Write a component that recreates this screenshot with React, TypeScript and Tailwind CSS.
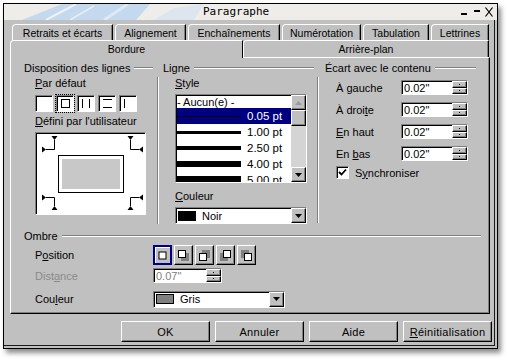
import React from "react";

const raised =
  "border-t border-l border-t-white border-l-white border-r border-b border-r-black border-b-black shadow-[inset_-1px_-1px_0_#808080]";
const sunken =
  "border-t border-l border-t-[#808080] border-l-[#808080] border-r border-b border-r-white border-b-white shadow-[inset_1px_1px_0_#000]";

function Rule() {
  return <div className="flex-1 ml-[4px] h-[2px] border-t border-t-[#808080] border-b border-b-white" />;
}

function Tri({ up, c = "#000" }: { up?: boolean; c?: string }) {
  return (
    <svg width="7" height="4" viewBox="0 0 7 4">
      <path d={up ? "M3.5 0L7 4H0z" : "M0 0h7L3.5 4z"} fill={c} />
    </svg>
  );
}

function Spin() {
  return (
    <div className="w-[15px] h-full flex flex-col">
      <div className={`flex-1 ${raised} bg-[#c0c0c0] flex items-center justify-center`}>
        <div className="w-px h-px bg-black" />
      </div>
      <div className={`flex-1 ${raised} bg-[#c0c0c0] flex items-center justify-center`}>
        <div className="w-px h-px bg-black" />
      </div>
    </div>
  );
}

function SpinField({ value, disabled, w }: { value: string; disabled?: boolean; w: string }) {
  return (
    <div className={`${w} h-[15px] ${sunken} bg-white flex items-stretch`}>
      <span className={`flex-1 pl-[2px] pt-[1px] leading-[12px] ${disabled ? "text-[#808080]" : "text-black"}`}>{value}</span>
      <Spin />
    </div>
  );
}

function ColorBox({ swatch, label, w }: { swatch: string; label: string; w: string }) {
  return (
    <div className={`${w} h-[17px] ${sunken} bg-white flex items-center`}>
      <div className="ml-[2px] w-[18px] h-[10px] border border-black" style={{ background: swatch }} />
      <span className="ml-[6px] flex-1">{label}</span>
      <div className={`w-[15px] h-full ${raised} bg-[#c0c0c0] flex items-center justify-center`}>
        <Tri />
      </div>
    </div>
  );
}

function PresetBox({ kind }: { kind: number }) {
  return (
    <div
      className={`w-[18px] h-[17px] ${sunken} bg-white relative ${kind === 1 ? "outline outline-1 outline-dotted outline-black" : ""}`}
    >
      <svg width="16" height="15" className="absolute left-0 top-0">
        {kind === 1 && <rect x="4.5" y="3.5" width="8" height="8" fill="none" stroke="#000" />}
        {kind === 2 && (
          <>
            <line x1="4.5" y1="3" x2="4.5" y2="12" stroke="#000" />
            <line x1="11.5" y1="3" x2="11.5" y2="12" stroke="#000" />
          </>
        )}
        {kind === 3 && (
          <>
            <line x1="4" y1="3.5" x2="13" y2="3.5" stroke="#000" />
            <line x1="4" y1="11.5" x2="13" y2="11.5" stroke="#000" />
          </>
        )}
        {kind === 4 && <line x1="4.5" y1="3" x2="4.5" y2="12" stroke="#000" />}
      </svg>
    </div>
  );
}

function ShadowBtn({ dx, dy, sel }: { dx: number; dy: number; sel?: boolean }) {
  const sx = dx > 0 ? 1 : dx < 0 ? 4 : 2.5;
  const sy = dy > 0 ? 1 : dy < 0 ? 4 : 2.5;
  return (
    <div
      className={`w-[19px] h-[20px] ${sel ? "border-2 border-[#000080] shadow-[inset_1px_1px_0_#fff]" : raised} bg-[#c0c0c0] flex items-center justify-center`}
    >
      <svg width="13" height="13" viewBox="0 0 13 13">
        {(dx !== 0 || dy !== 0) && <rect x={sx + dx} y={sy + dy} width="8" height="8" fill="#808080" />}
        <rect x={sx + 0.5} y={sy + 0.5} width="7" height="7" fill="#fff" stroke="#000" />
      </svg>
    </div>
  );
}

const lineStyles = [
  { label: "0.05 pt", h: 1, sel: true },
  { label: "1.00 pt", h: 3 },
  { label: "2.50 pt", h: 4 },
  { label: "4.00 pt", h: 6 },
  { label: "5.00 pt", h: 8 },
];

function TitleBar() {
  return (
    <div className="h-[16px] relative bg-[#eeede9] flex items-center overflow-hidden">
      <svg width="493" height="16" className="absolute left-0 top-0">
        <polygon points="18,16 58,0 146,0 132,16" fill="#c4d8ee" />
        <polygon points="150,16 170,4 200,0 190,16" fill="#dde6ef" />
        <line x1="42" y1="16" x2="72" y2="0" stroke="#fff" strokeWidth="2" opacity="0.7" />
        <line x1="66" y1="16" x2="90" y2="2" stroke="#fff" strokeWidth="1.5" opacity="0.6" />
        <line x1="100" y1="16" x2="124" y2="0" stroke="#e6eef8" strokeWidth="3" opacity="0.8" />
        <rect x="457" y="9" width="6" height="2" fill="#000" />
        <rect x="470" y="6" width="6" height="2" fill="#000" />
        <path d="M481.5 3.5L488.5 12.5M488.5 3.5L481.5 12.5" stroke="#000" strokeWidth="1.2" />
      </svg>
      <span className="relative ml-[199px] font-['DejaVu_Sans_Mono',monospace] text-[11px] leading-[12px]">
        Paragraphe
      </span>
    </div>
  );
}

export default function App() {
  const tabs1: [string, string][] = [
    ["Retraits et écarts", "w-[101px]"],
    ["Alignement", "w-[71px]"],
    ["Enchaînements", "w-[92px]"],
    ["Numérotation", "w-[79px]"],
    ["Tabulation", "w-[66px]"],
    ["Lettrines", "w-[58px]"],
  ];
  return (
    <div className="w-[509px] h-[361px] bg-white overflow-hidden font-['Liberation_Sans',Arial,sans-serif] text-[11px] leading-[12px] text-black">
      <div className="ml-[3px] mt-[3px] w-[495px] h-[346px] border border-black bg-[#c0c0c0] shadow-[3px_4px_5px_rgba(0,0,0,0.45)] flex flex-col">
        <TitleBar />
        <div className="flex-1 mr-[2px] mb-[2px] border-r border-b border-[#1a1a1a] flex flex-col pt-[4px]">
          {/* tabs */}
          <div className="ml-[8px] flex gap-[2px] h-[16px]">
            {tabs1.map(([t, w]) => (
              <div
                key={t}
                className={`${w} h-[16px] border-t border-l border-white border-r border-r-black shadow-[inset_-1px_0_0_#808080] rounded-tl-[4px] flex items-center justify-center text-[10.5px]`}
              >
                {t}
              </div>
            ))}
          </div>
          <div className="ml-[6px] flex items-start h-[17px]">
            <div className="relative z-10 w-[233px] h-[18px] bg-[#c0c0c0] border-t border-l border-white border-r border-r-black rounded-tl-[4px] flex items-center justify-center text-[10.5px] pb-[1px]">
              Bordure
            </div>
            <div className="w-[246px] h-[17px] border-t border-l border-white border-r border-r-black shadow-[inset_-1px_0_0_#808080] rounded-tl-[4px] flex items-center justify-center text-[10.5px]">
              Arrière-plan
            </div>
          </div>

          {/* panel */}
          <div className="ml-[6px] w-[480px] h-[257px] border-t border-l border-white border-r border-b border-r-black border-b-black shadow-[inset_-1px_-1px_0_#808080] flex flex-col">
            <div className="h-[168px] flex">
              {/* Disposition des lignes */}
              <div className="w-[146px] flex flex-col">
                <div className="mt-[4px] ml-[13px] mr-[4px] flex items-center h-[12px]">
                  <span>Disposition des lignes</span>
                  <Rule />
                </div>
                <div className="pl-[24px] flex flex-col">
                  <div className="mt-[3px] h-[12px]">
                    <span className="underline">P</span>ar défaut
                  </div>
                  <div className="mt-[6px] flex gap-[3px]">
                    {[0, 1, 2, 3, 4].map((k) => (
                      <PresetBox key={k} kind={k} />
                    ))}
                  </div>
                  <div className="mt-[3px] h-[12px]">
                    <span className="underline">D</span>éfini par l'utilisateur
                  </div>
                  <div className={`mt-[5px] w-[111px] h-[83px] ${sunken} bg-white relative`}>
                    <svg width="109" height="81" className="absolute left-0 top-0">
                      <g stroke="#000" strokeWidth="1" fill="none">
                        <path d="M18.5 7V16.5H10" />
                        <path d="M94.5 7V16.5H103" />
                        <path d="M10 64.5H18.5V73" />
                        <path d="M103 64.5H94.5V73" />
                      </g>
                      <g fill="#000">
                        <path d="M15.5 3h6l-3 4z" />
                        <path d="M91.5 3h6l-3 4z" />
                        <path d="M6 13.5v6l4-3z" />
                        <path d="M107 13.5v6l-4-3z" />
                        <path d="M6 61.5v6l4-3z" />
                        <path d="M107 61.5v6l-4-3z" />
                        <path d="M15.5 77h6l-3-4z" />
                        <path d="M91.5 77h6l-3-4z" />
                      </g>
                      <rect x="22.5" y="22.5" width="65" height="37" fill="#fff" stroke="#000" />
                      <rect x="26" y="26" width="58" height="30" fill="#c8c8c8" />
                    </svg>
                  </div>
                </div>
              </div>

              {/* Ligne */}
              <div className="w-[160px] flex flex-col">
                <div className="mt-[4px] ml-[6px] mr-[3px] flex items-center h-[12px]">
                  <span>Ligne</span>
                  <Rule />
                </div>
                <div className="mt-[3px] mb-[3px] flex-1 border-l border-l-[#808080] shadow-[inset_1px_0_0_#fff] pl-[17px] flex flex-col">
                  <div className="h-[12px]">
                    <span className="underline">S</span>tyle
                  </div>
                  <div className={`mt-[5px] w-[132px] h-[89px] ${sunken} bg-white flex overflow-hidden`}>
                    <div className="flex-1 flex flex-col pl-[1px] pt-[1px]">
                      <div className="h-[15px] flex items-center">- Aucun(e) -</div>
                      {lineStyles.map((s) => (
                        <div
                          key={s.label}
                          className={`h-[16px] shrink-0 flex items-center ${s.sel ? "bg-[#000080] text-white" : ""}`}
                        >
                          <div className="w-[64px] bg-black" style={{ height: s.h }} />
                          <span className="ml-[6px] text-[11.5px]">{s.label}</span>
                        </div>
                      ))}
                    </div>
                    <div className="w-[15px] flex flex-col bg-[#d4d4d4]">
                      <div className={`h-[15px] ${raised} bg-[#c0c0c0] flex items-center justify-center`}>
                        <Tri up c="#9a9a9a" />
                      </div>
                      <div className={`h-[16px] ${raised} bg-[#c0c0c0]`} />
                      <div className="flex-1" />
                      <div className={`h-[15px] ${raised} bg-[#c0c0c0] flex items-center justify-center`}>
                        <Tri />
                      </div>
                    </div>
                  </div>
                  <div className="mt-[7px] h-[12px]">
                    <span className="underline">C</span>ouleur
                  </div>
                  <div className="mt-[5px]">
                    <ColorBox swatch="#000" label="Noir" w="w-[132px]" />
                  </div>
                </div>
              </div>

              {/* Écart avec le contenu */}
              <div className="w-[172px] flex flex-col">
                <div className="mt-[4px] ml-[8px] mr-[13px] flex items-center h-[12px]">
                  <span>Écart avec le contenu</span>
                  <Rule />
                </div>
                <div className="mt-[3px] mb-[3px] flex-1 border-l border-l-[#808080] shadow-[inset_1px_0_0_#fff] pl-[18px] pt-[3px] flex flex-col gap-[7px]">
                  {[
                    [<>À <span className="underline">g</span>auche</>, "a"],
                    [<>À droi<span className="underline">t</span>e</>, "b"],
                    [<><span className="underline">E</span>n haut</>, "c"],
                    [<>En <span className="underline">b</span>as</>, "d"],
                  ].map(([label, k]) => (
                    <div key={k as string} className="h-[15px] flex items-center">
                      <span className="w-[65px]">{label}</span>
                      <SpinField value={'0.02"'} w="w-[67px]" />
                    </div>
                  ))}
                  <div className="-mt-[2px] flex items-center h-[13px]">
                    <div className={`w-[13px] h-[13px] ${sunken} bg-white flex items-center justify-center`}>
                      <svg width="9" height="9" viewBox="0 0 9 9">
                        <path d="M1 4l2.5 2.5L8 1.5" stroke="#000" strokeWidth="1.8" fill="none" />
                      </svg>
                    </div>
                    <span className="ml-[6px]">
                      S<span className="underline">y</span>nchroniser
                    </span>
                  </div>
                </div>
              </div>
            </div>

            {/* Ombre */}
            <div className="mt-[4px] ml-[13px] mr-[8px] flex items-center h-[12px]">
              <span>Ombre</span>
              <Rule />
            </div>
            <div className="pl-[24px] flex flex-col">
              <div className="mt-[3px] h-[20px] flex items-center">
                <span className="w-[118px]">
                  P<span className="underline">o</span>sition
                </span>
                <div className="flex gap-[2px]">
                  <ShadowBtn dx={0} dy={0} sel />
                  <ShadowBtn dx={3} dy={3} />
                  <ShadowBtn dx={3} dy={-3} />
                  <ShadowBtn dx={-3} dy={3} />
                  <ShadowBtn dx={-3} dy={-3} />
                </div>
              </div>
              <div className="mt-[3px] h-[15px] flex items-center">
                <span className="w-[118px] text-[#8a8a8a]">
                  Dist<span className="underline">a</span>nce
                </span>
                <SpinField value={'0.07"'} w="w-[69px]" disabled />
              </div>
              <div className="mt-[7px] h-[18px] flex items-center">
                <span className="w-[118px]">
                  Cou<span className="underline">l</span>eur
                </span>
                <ColorBox swatch="#808080" label="Gris" w="w-[132px]" />
              </div>
            </div>
          </div>

          {/* buttons */}
          <div className="mt-[7px] mr-[2px] flex justify-end gap-[5px]">
            {["OK", "Annuler", "Aide"].map((b) => (
              <div key={b} className={`w-[89px] h-[21px] ${raised} flex items-center justify-center tracking-[0.3px]`}>
                {b}
              </div>
            ))}
            <div className={`w-[89px] h-[21px] ${raised} flex items-center justify-center tracking-[0.3px]`}>
              <span className="underline">R</span>éinitialisation
            </div>
          </div>
        </div>
      </div>
    </div>
  );
}
